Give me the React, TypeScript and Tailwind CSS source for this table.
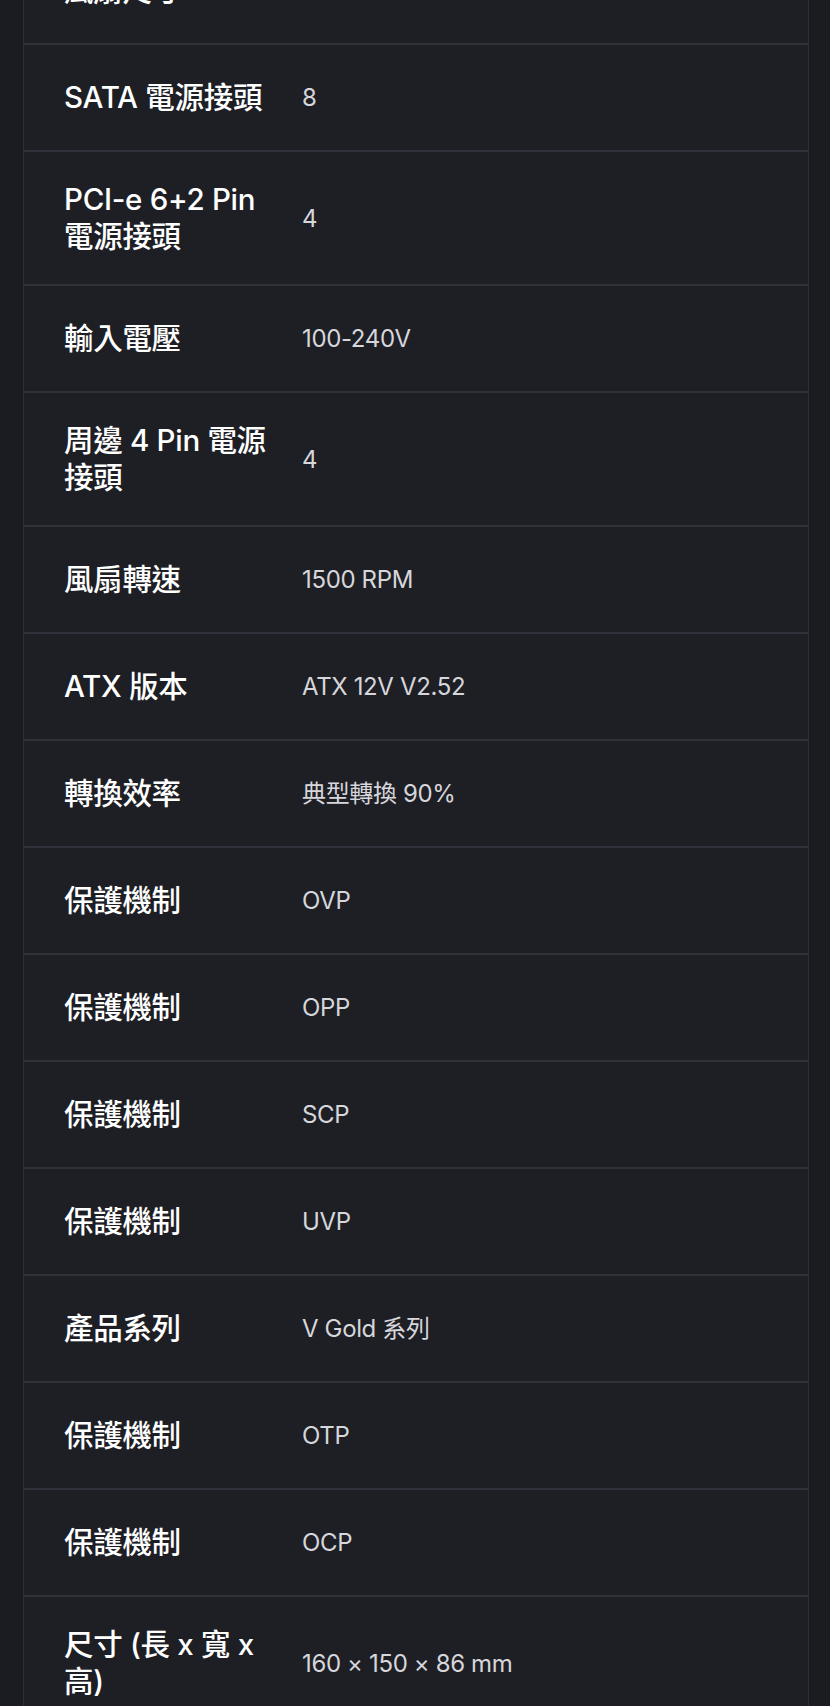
type Spec = {
  label: string;
  value: string;
};

const specs: Spec[] = [
  { label: "風扇尺寸", value: "120 mm" },
  { label: "SATA 電源接頭", value: "8" },
  { label: "PCI-e 6+2 Pin 電源接頭", value: "4" },
  { label: "輸入電壓", value: "100-240V" },
  { label: "周邊 4 Pin 電源接頭", value: "4" },
  { label: "風扇轉速", value: "1500 RPM" },
  { label: "ATX 版本", value: "ATX 12V V2.52" },
  { label: "轉換效率", value: "典型轉換 90%" },
  { label: "保護機制", value: "OVP" },
  { label: "保護機制", value: "OPP" },
  { label: "保護機制", value: "SCP" },
  { label: "保護機制", value: "UVP" },
  { label: "產品系列", value: "V Gold 系列" },
  { label: "保護機制", value: "OTP" },
  { label: "保護機制", value: "OCP" },
  { label: "尺寸 (長 x 寬 x 高)", value: "160 × 150 × 86 mm" },
];

export default function App() {
  return (
    <div
      className="min-h-screen overflow-hidden bg-[#1b1c21] pl-[23px] pr-[21px]"
      style={{ fontFamily: 'Inter, "Noto Sans CJK TC", sans-serif' }}
    >
      <div className="-mt-[62px] border-x border-[#2c2d35] bg-[#1e1f25]">
        {specs.map((spec, i) => (
          <div
            key={i}
            className="flex items-center gap-8 border-b-2 border-[#30313a] py-[29px] pl-10 pr-6"
          >
            <div className="w-[206px] shrink-0 text-[29.5px] font-medium leading-[37px] tracking-[-0.01em] text-white">
              {spec.label}
            </div>
            <div className="text-[24px] leading-[47px] tracking-[-0.015em] text-[#d6d6db]">
              {spec.value}
            </div>
          </div>
        ))}
      </div>
    </div>
  );
}
